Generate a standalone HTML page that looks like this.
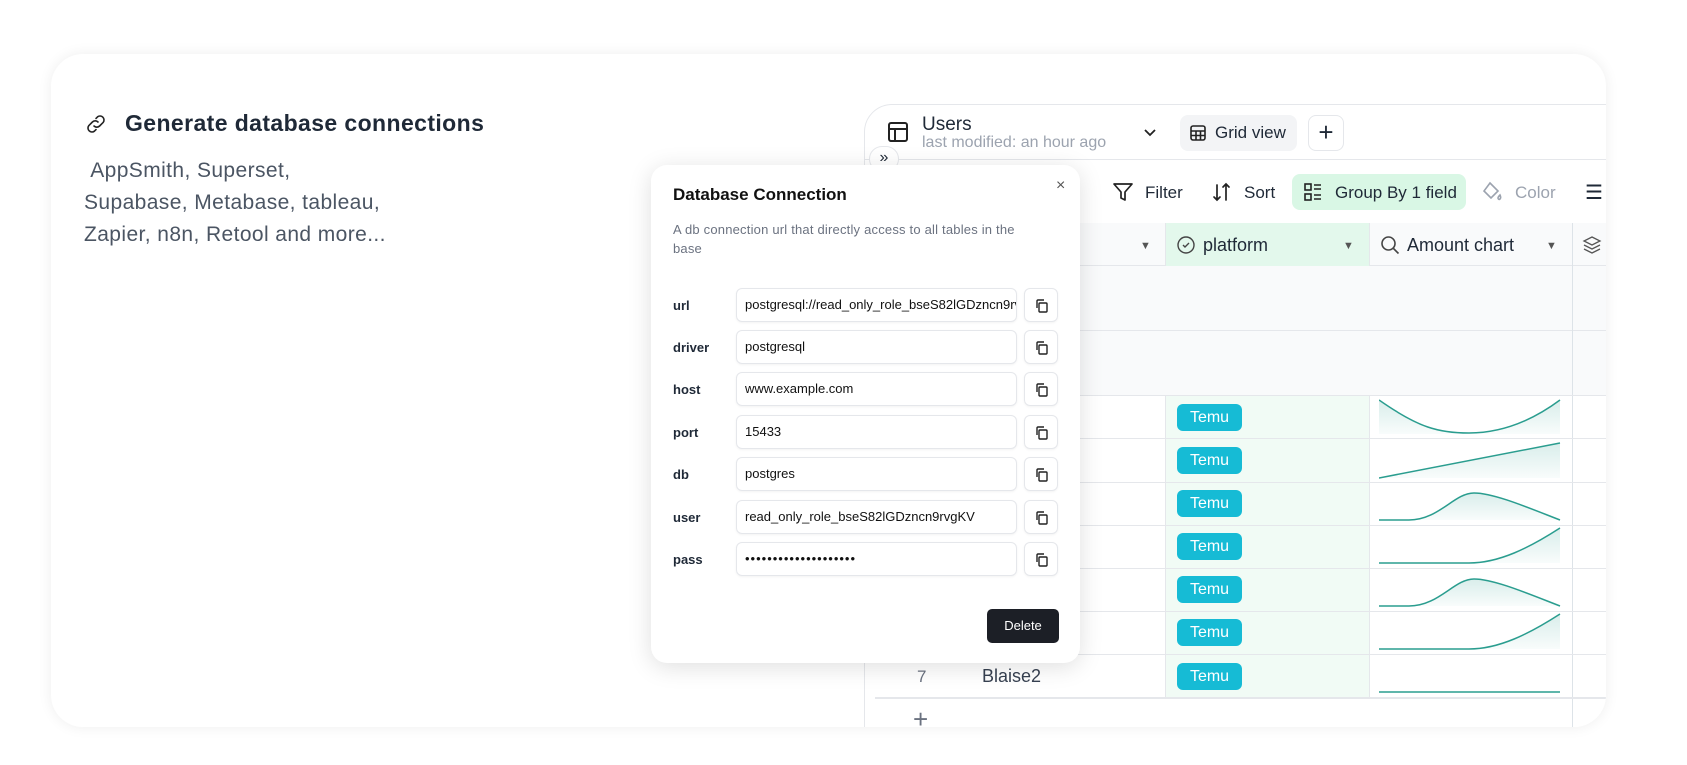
<!DOCTYPE html>
<html><head><meta charset="utf-8"><style>
*{box-sizing:border-box;margin:0;padding:0}
body{width:1687px;height:765px;background:#fff;font-family:"Liberation Sans",sans-serif;position:relative;overflow:hidden;color:#1f2937}
.abs{position:absolute}
.card{left:51px;top:54px;width:1555px;height:673px;border-radius:32px;background:#fff;box-shadow:0 0 14px rgba(0,0,0,.07);overflow:hidden}
.title{left:125px;top:110px;font-size:23px;font-weight:bold;color:#1f2937;letter-spacing:.4px}
.desc{left:84px;top:155px;font-size:21px;line-height:32px;color:#4b5563;letter-spacing:.4px}
.clip{position:absolute;left:0;top:0;width:1687px;height:765px;clip-path:inset(54px 81px 38px 51px round 32px)}
.grid{left:864px;top:104px;width:760px;height:640px;border:1px solid #e5e7eb;border-radius:28px 0 0 0;background:#fff;overflow:hidden}
.temu{position:absolute;left:1177px;width:65px;height:27px;border-radius:6px;background:#16bbd5;color:#fff;font-size:16px;line-height:27px;text-align:center}
.modal{left:651px;top:165px;width:429px;height:498px;background:#fff;border-radius:16px;box-shadow:0 4px 24px rgba(0,0,0,.13)}
.lbl{position:absolute;left:22px;font-size:13px;font-weight:bold;color:#1f2937}
.inp{position:absolute;left:85px;width:281px;height:34px;border:1px solid #e5e7eb;border-radius:6px;font-size:13px;line-height:32px;padding-left:8px;white-space:nowrap;overflow:hidden;color:#111;box-shadow:0 1px 2px rgba(0,0,0,.05)}
.cp{position:absolute;left:373px;width:34px;height:34px;border:1px solid #e5e7eb;border-radius:6px;box-shadow:0 1px 2px rgba(0,0,0,.05)}
.cp svg{position:absolute;left:9px;top:9px}
.tb{position:absolute;top:183px;font-size:17px;color:#1f2937}
.hl{position:absolute;left:875px;width:731px;height:1px;background:#e5e7eb}
</style></head><body>
<div class="abs card"></div>
<svg class="abs" style="left:84px;top:112px" width="24" height="24" viewBox="0 0 24 24" fill="none" stroke="#222" stroke-width="1.6" stroke-linecap="round"><path d="M10 14a4 4 0 0 0 5.6 0l3.6-3.6a4 4 0 0 0-5.6-5.6L12 6.4"/><path d="M14 10a4 4 0 0 0-5.6 0L4.8 13.6a4 4 0 0 0 5.6 5.6L12 17.6"/></svg>
<div class="abs title">Generate database connections</div>
<div class="abs desc">&nbsp;AppSmith, Superset,<br>Supabase, Metabase, tableau,<br>Zapier, n8n, Retool and more...</div>

<div class="clip">
<div class="abs grid"></div>
<div class="abs" style="left:865px;top:159px;width:741px;height:1px;background:#e5e7eb"></div>
<div class="abs" style="left:865px;top:223px;width:741px;height:43px;background:#f9fafb;border-bottom:1px solid #e5e7eb"></div>
<div class="abs" style="left:1165px;top:223px;width:204px;height:43px;background:#e3f8ec"></div>
<div class="abs" style="left:865px;top:266px;width:741px;height:129px;background:#f9fafb"></div>
<div class="abs" style="left:865px;top:330px;width:741px;height:1px;background:#e5e7eb"></div>
<div class="abs" style="left:1165px;top:395px;width:204px;height:302px;background:#f1fbf5"></div>
<div class="abs" style="left:1165px;top:223px;width:1px;height:43px;background:#e5e7eb"></div>
<div class="abs" style="left:1369px;top:223px;width:1px;height:43px;background:#e5e7eb"></div>
<div class="abs" style="left:1165px;top:395px;width:1px;height:302px;background:#e5e7eb"></div>
<div class="abs" style="left:1369px;top:395px;width:1px;height:302px;background:#e5e7eb"></div>
<div class="abs" style="left:1572px;top:223px;width:1px;height:504px;background:#dde3e8"></div>
<div class="hl" style="top:395px"></div><div class="hl" style="top:438px"></div><div class="hl" style="top:482px"></div><div class="hl" style="top:525px"></div><div class="hl" style="top:568px"></div><div class="hl" style="top:611px"></div><div class="hl" style="top:654px"></div><div class="hl" style="top:697px;height:2px"></div>

<svg class="abs" style="left:886px;top:120px" width="24" height="24" viewBox="0 0 24 24" fill="none" stroke="#222" stroke-width="2"><rect x="3" y="3" width="18" height="18" rx="2"/><path d="M3 9h18M9 9v12"/></svg>
<div class="abs" style="left:922px;top:114px;font-size:19px">Users</div>
<div class="abs" style="left:922px;top:134px;font-size:16px;color:#9ca3af">last modified: an hour ago</div>
<svg class="abs" style="left:1142px;top:126px" width="16" height="14" viewBox="0 0 16 14" fill="none" stroke="#222" stroke-width="1.8"><path d="M3 4l5 5 5-5"/></svg>
<div class="abs" style="left:1180px;top:115px;width:117px;height:36px;background:#f3f4f6;border-radius:8px"></div>
<svg class="abs" style="left:1189px;top:124px" width="18" height="18" viewBox="0 0 18 18" fill="none" stroke="#222" stroke-width="1.6"><rect x="2" y="2" width="14" height="14" rx="2"/><path d="M2 7h14M2 11.5h14M7 7v9M11.5 7v9"/></svg>
<div class="abs" style="left:1215px;top:123px;font-size:17px">Grid view</div>
<div class="abs" style="left:1308px;top:115px;width:36px;height:36px;border:1px solid #e5e7eb;border-radius:8px;font-size:26px;line-height:32px;text-align:center">+</div>
<div class="abs" style="left:869px;top:146px;width:30px;height:26px;border-radius:13px;background:#fff;border:1px solid #e5e7eb;font-size:16px;text-align:center;line-height:22px">»</div>

<svg class="abs" style="left:1112px;top:181px" width="22" height="22" viewBox="0 0 22 22" fill="none" stroke="#222" stroke-width="1.7" stroke-linejoin="round"><path d="M2 3h18l-7 8v8l-4-2v-6z"/></svg>
<div class="tb" style="left:1145px">Filter</div>
<svg class="abs" style="left:1211px;top:181px" width="22" height="22" viewBox="0 0 22 22" fill="none" stroke="#222" stroke-width="1.7" stroke-linecap="round"><path d="M6 4v15M3 16l3 3 3-3M15 19V3M12 6l3-3 3 3"/></svg>
<div class="tb" style="left:1244px">Sort</div>
<div class="abs" style="left:1292px;top:174px;width:174px;height:36px;background:#d9f7e5;border-radius:8px"></div>
<svg class="abs" style="left:1303px;top:182px" width="20" height="20" viewBox="0 0 20 20" fill="none" stroke="#222" stroke-width="1.6"><rect x="2" y="2" width="6" height="6"/><rect x="2" y="12" width="6" height="6"/><path d="M11 3h7M11 7h7M11 13h7M11 17h7"/></svg>
<div class="tb" style="left:1335px">Group By 1 field</div>
<svg class="abs" style="left:1481px;top:181px" width="22" height="22" viewBox="0 0 22 22" fill="none" stroke="#9ca3af" stroke-width="1.6"><path d="M9 2l8 8-7 7-7-7z"/><path d="M19 14c1 2 1 3 0 4s-2 0 -2-1 1-2 2-3z"/></svg>
<div class="tb" style="left:1515px;color:#9ca3af">Color</div>
<div class="tb" style="left:1585px;font-size:20px;top:180px">☰</div>

<div class="abs" style="left:1140px;top:240px;font-size:11px;color:#555">▼</div>
<svg class="abs" style="left:1176px;top:235px" width="20" height="20" viewBox="0 0 20 20" fill="none" stroke="#444" stroke-width="1.4"><circle cx="10" cy="10" r="8"/><path d="M7 10l2 2 4-4"/></svg>
<div class="abs" style="left:1203px;top:235px;font-size:18px">platform</div>
<div class="abs" style="left:1343px;top:240px;font-size:11px;color:#555">▼</div>
<svg class="abs" style="left:1380px;top:235px" width="20" height="20" viewBox="0 0 20 20" fill="none" stroke="#444" stroke-width="1.6"><circle cx="8.5" cy="8.5" r="6.5"/><path d="M13.5 13.5l5 5"/></svg>
<div class="abs" style="left:1407px;top:235px;font-size:18px">Amount chart</div>
<div class="abs" style="left:1546px;top:240px;font-size:11px;color:#555">▼</div>
<svg class="abs" style="left:1582px;top:235px" width="20" height="20" viewBox="0 0 20 20" fill="none" stroke="#555" stroke-width="1.3"><path d="M10 2l8 4-8 4-8-4z"/><path d="M2 10l8 4 8-4M2 14l8 4 8-4"/></svg>

<div class="temu" style="top:404px">Temu</div>
<div class="temu" style="top:447px">Temu</div>
<div class="temu" style="top:490px">Temu</div>
<div class="temu" style="top:533px">Temu</div>
<div class="temu" style="top:576px">Temu</div>
<div class="temu" style="top:619px">Temu</div>
<div class="temu" style="top:663px">Temu</div>

<svg class="abs" style="left:1379px;top:398px" width="182" height="300" viewBox="0 0 182 300" fill="none" stroke="#2a9d8f" stroke-width="1.5">
<defs><linearGradient id="g" x1="0" y1="0" x2="0" y2="1"><stop offset="0" stop-color="#2a9d8f" stop-opacity=".18"/><stop offset="1" stop-color="#2a9d8f" stop-opacity=".03"/></linearGradient></defs>
<path d="M0 2C40 30 60 35 90 35S150 25 181 2V36H0z" fill="url(#g)" stroke="none"/><path d="M0 2C40 30 60 35 90 35S150 25 181 2"/>
<path d="M0 80L181 45V80z" fill="url(#g)" stroke="none"/><path d="M0 80L181 45"/>
<path d="M0 122H30C60 122 75 95 95 95S150 110 181 122z" fill="url(#g)" stroke="none"/><path d="M0 122H30C60 122 75 95 95 95S150 110 181 122"/>
<path d="M0 165H90C120 165 150 150 181 130V165z" fill="url(#g)" stroke="none"/><path d="M0 165H90C120 165 150 150 181 130"/>
<path d="M0 208H30C60 208 75 181 95 181S150 196 181 208z" fill="url(#g)" stroke="none"/><path d="M0 208H30C60 208 75 181 95 181S150 196 181 208"/>
<path d="M0 251H90C120 251 150 236 181 216V251z" fill="url(#g)" stroke="none"/><path d="M0 251H90C120 251 150 236 181 216"/>
<path d="M0 294H181"/>
</svg>
<div class="abs" style="left:917px;top:667px;font-size:17px;color:#6b7280">7</div>
<div class="abs" style="left:982px;top:666px;font-size:18px;color:#374151">Blaise2</div>
<div class="abs" style="left:913px;top:704px;font-size:26px;color:#6b7280">+</div>
</div>

<div class="abs modal">
<div class="abs" style="left:22px;top:20px;font-size:17px;font-weight:bold;color:#111">Database Connection</div>
<div class="abs" style="left:405px;top:12px;font-size:16px;color:#555">×</div>
<div class="abs" style="left:22px;top:55px;font-size:13px;line-height:19px;color:#6b7280;width:360px;letter-spacing:.2px">A db connection url that directly access to all tables in the base</div>
<div class="lbl" style="top:133px">url</div><div class="inp" style="top:123px">postgresql://read_only_role_bseS82lGDzncn9rvgKV</div><div class="cp" style="top:123px"><svg width="16" height="16" viewBox="0 0 16 16" fill="none" stroke="#222" stroke-width="1.4"><rect x="5" y="5" width="8" height="9" rx="1"/><path d="M3 10V3a1 1 0 0 1 1-1h6"/></svg></div>
<div class="lbl" style="top:175px">driver</div><div class="inp" style="top:165px">postgresql</div><div class="cp" style="top:165px"><svg width="16" height="16" viewBox="0 0 16 16" fill="none" stroke="#222" stroke-width="1.4"><rect x="5" y="5" width="8" height="9" rx="1"/><path d="M3 10V3a1 1 0 0 1 1-1h6"/></svg></div>
<div class="lbl" style="top:217px">host</div><div class="inp" style="top:207px">www.example.com</div><div class="cp" style="top:207px"><svg width="16" height="16" viewBox="0 0 16 16" fill="none" stroke="#222" stroke-width="1.4"><rect x="5" y="5" width="8" height="9" rx="1"/><path d="M3 10V3a1 1 0 0 1 1-1h6"/></svg></div>
<div class="lbl" style="top:260px">port</div><div class="inp" style="top:250px">15433</div><div class="cp" style="top:250px"><svg width="16" height="16" viewBox="0 0 16 16" fill="none" stroke="#222" stroke-width="1.4"><rect x="5" y="5" width="8" height="9" rx="1"/><path d="M3 10V3a1 1 0 0 1 1-1h6"/></svg></div>
<div class="lbl" style="top:302px">db</div><div class="inp" style="top:292px">postgres</div><div class="cp" style="top:292px"><svg width="16" height="16" viewBox="0 0 16 16" fill="none" stroke="#222" stroke-width="1.4"><rect x="5" y="5" width="8" height="9" rx="1"/><path d="M3 10V3a1 1 0 0 1 1-1h6"/></svg></div>
<div class="lbl" style="top:345px">user</div><div class="inp" style="top:335px">read_only_role_bseS82lGDzncn9rvgKV</div><div class="cp" style="top:335px"><svg width="16" height="16" viewBox="0 0 16 16" fill="none" stroke="#222" stroke-width="1.4"><rect x="5" y="5" width="8" height="9" rx="1"/><path d="M3 10V3a1 1 0 0 1 1-1h6"/></svg></div>
<div class="lbl" style="top:387px">pass</div><div class="inp" style="top:377px;letter-spacing:1px">••••••••••••••••••••</div><div class="cp" style="top:377px"><svg width="16" height="16" viewBox="0 0 16 16" fill="none" stroke="#222" stroke-width="1.4"><rect x="5" y="5" width="8" height="9" rx="1"/><path d="M3 10V3a1 1 0 0 1 1-1h6"/></svg></div>
<div class="abs" style="left:336px;top:444px;width:72px;height:34px;background:#1c1f26;border-radius:5px;color:#fff;font-size:13px;line-height:34px;text-align:center">Delete</div>
</div>
</body></html>
